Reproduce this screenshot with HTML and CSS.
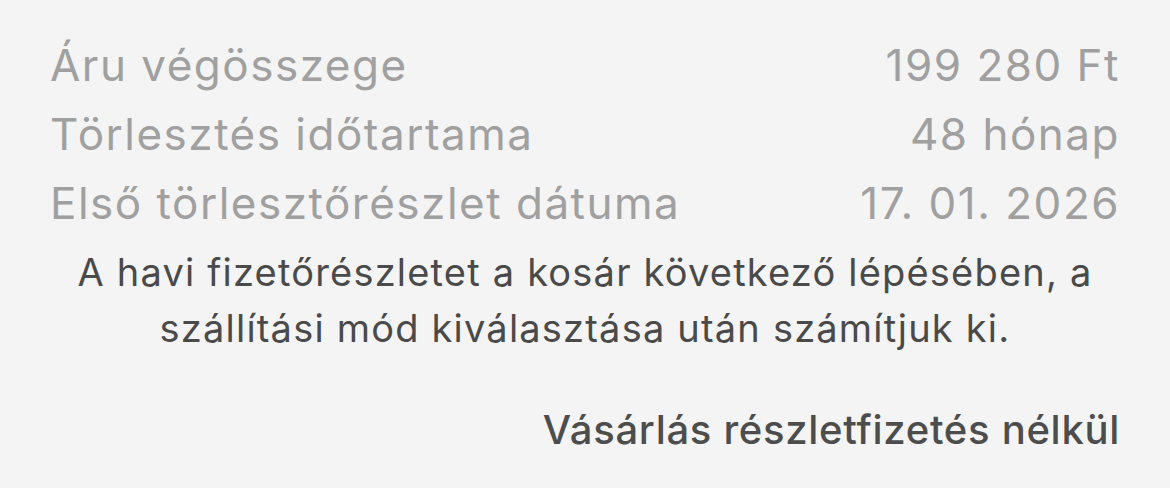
FILE: index.html
```html
<!DOCTYPE html>
<html lang="hu">
<head>
    <meta charset="UTF-8">
    <meta name="viewport" content="width=device-width, initial-scale=1.0">
    <title>Részletfizetés</title>
    <link rel="stylesheet" href="styles.css">
</head>
<body>

    <!-- Összegzés -->
    <div class="summary">
        <div class="row">
            <span>Áru végösszege</span>
            <span>199 280 Ft</span>
        </div>
        <div class="row">
            <span>Törlesztés időtartama</span>
            <span>48 hónap</span>
        </div>
        <div class="row">
            <span>Első törlesztőrészlet dátuma</span>
            <span>17. 01. 2026</span>
        </div>
    </div>

    <p class="note">A havi fizetőrészletet a kosár következő lépésében, a szállítási mód kiválasztása után számítjuk ki.</p>

    <div class="actions">
        <a href="#" class="link">Vásárlás részletfizetés nélkül</a>
    </div>

</body>
</html>
```

FILE: styles.css
```css
body {
    font-family: Inter, "Noto Sans", sans-serif;
    background-color: #f4f4f4;
    margin: 0;
    padding: 31px 50px 0 50px;
}

/* Összegzés */
.summary {
    display: flex;
    flex-direction: column;
}

.row {
    display: flex;
    justify-content: space-between;
    color: #a0a0a0;
    font-size: 44px;
    letter-spacing: 1.5px;
    line-height: 69px;
}

.note {
    margin: 6px 0 0;
    text-align: center;
    color: #4a4a4a;
    font-size: 38px;
    letter-spacing: 1.2px;
    line-height: 56px;
}

.actions {
    display: flex;
    justify-content: flex-end;
    margin-top: 50px;
}

.link {
    color: #4d4d4d;
    font-size: 40px;
    font-weight: 500;
    letter-spacing: 0.7px;
    line-height: 48px;
    text-decoration: none;
}
```
